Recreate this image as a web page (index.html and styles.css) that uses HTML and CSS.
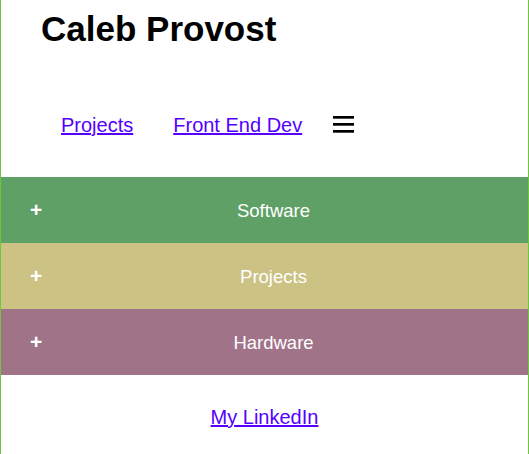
FILE: index.html
```html
<!DOCTYPE html>
<html>
<head>
<meta charset="utf-8">
<link rel="stylesheet" href="styles.css">
</head>
<body>
<header class="site-header">
  <h1 class="title">Caleb Provost</h1>
  <nav class="nav">
    <a class="nav-link" href="#">Projects</a>
    <a class="nav-link" href="#">Front End Dev</a>
    <span class="burger" aria-label="menu">
      <svg width="21" height="17" viewBox="0 0 21 17"><rect x="0" y="0" width="21" height="2.7" fill="#000"/><rect x="0" y="7" width="21" height="2.7" fill="#000"/><rect x="0" y="14" width="21" height="2.7" fill="#000"/></svg>
    </span>
  </nav>
</header>
<section class="accordion">
  <div class="acc-row acc-green"><span class="acc-plus">+</span><span class="acc-label">Software</span></div>
  <div class="acc-row acc-khaki"><span class="acc-plus">+</span><span class="acc-label">Projects</span></div>
  <div class="acc-row acc-mauve"><span class="acc-plus">+</span><span class="acc-label">Hardware</span></div>
</section>
<footer class="footer">
  <a class="nav-link" href="#">My LinkedIn</a>
</footer>
</body>
</html>
```
FILE: styles.css
```css
html, body {
  margin: 0;
  padding: 0;
  background: #ffffff;
}
body {
  font-family: "Liberation Sans", Arial, sans-serif;
  border-left: 1px solid #6cc838;
  border-right: 1px solid #6cc838;
  min-height: 454px;
  box-sizing: border-box;
}
.site-header {
  padding: 9px 0 0 40px;
}
.title {
  margin: 0;
  font-size: 35px;
  line-height: 40px;
  font-weight: bold;
  color: #000;
}
.nav {
  display: flex;
  align-items: flex-start;
  margin-top: 65px;
  padding-left: 20px;
  height: 23px;
}
.nav-link {
  font-size: 20px;
  line-height: 23px;
  color: #5500ff;
  text-decoration: underline;
}
.nav .nav-link + .nav-link {
  margin-left: 40px;
}
.burger {
  display: block;
  margin-left: 31px;
  margin-top: 2px;
  height: 17px;
}
.burger svg {
  display: block;
}
.accordion {
  margin-top: 40px;
}
.acc-row {
  display: flex;
  align-items: center;
  height: 66px;
  color: #ffffff;
}
.acc-green { background: #5ea066; }
.acc-khaki { background: #cbc283; }
.acc-mauve { background: #a07388; }
.acc-plus {
  width: 13px;
  margin-left: 29px;
  font-size: 21px;
  font-weight: bold;
  line-height: 20px;
}
.acc-label {
  flex: 1;
  text-align: center;
  font-size: 18.5px;
  line-height: 22px;
  padding-right: 24px;
  padding-top: 2px;
}
.footer {
  padding-top: 31px;
  text-align: center;
}
```
